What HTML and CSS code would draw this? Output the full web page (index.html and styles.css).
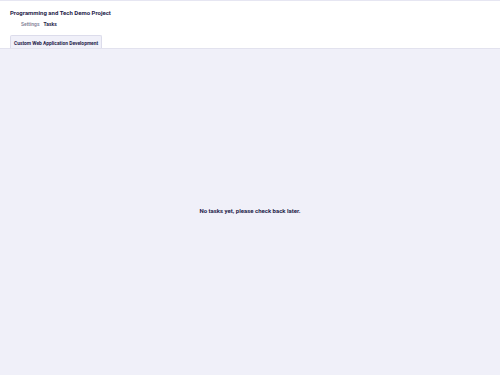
FILE: index.html
```html
<!DOCTYPE html>
<html>
<head>
<meta charset="utf-8">
<link rel="stylesheet" href="styles.css">
</head>
<body>
<div class="page">
  <header class="header">
    <h1 class="title">Programming and Tech Demo Project</h1>
    <nav class="nav">
      <a class="nav-link">Settings</a>
      <a class="nav-link active">Tasks</a>
    </nav>
    <div class="tabs">
      <div class="tab">Custom Web Application Development</div>
    </div>
  </header>
  <main class="main">
    <p class="empty">No tasks yet, please check back later.</p>
  </main>
</div>
</body>
</html>
```
FILE: styles.css
```css
html, body {
  margin: 0;
  padding: 0;
  height: 100%;
}
body {
  font-family: Roboto, "Noto Sans", sans-serif;
  background: #f0f0f9;
  color: #1f1d4a;
}
.page {
  display: flex;
  flex-direction: column;
  height: 100%;
}
.header {
  background: #ffffff;
  border-top: 1px solid #e6e6f2;
  border-bottom: 1px solid #e2e2ee;
  padding: 7px 10px 0 10px;
  display: flex;
  flex-direction: column;
}
.title {
  margin: 0;
  font-size: 6px;
  font-weight: 700;
  line-height: 9px;
  color: #1f1d4a;
}
.nav {
  display: flex;
  gap: 4px;
  padding-left: 11px;
  margin-top: 3px;
  font-size: 5px;
  line-height: 8px;
}
.nav-link {
  color: #7a7a90;
  font-weight: 500;
}
.nav-link.active {
  color: #1f1d4a;
  font-weight: 700;
}
.tabs {
  display: flex;
  margin-top: 7px;
}
.tab {
  background: #f0f0f9;
  border: 1px solid #dcdceb;
  border-bottom: none;
  border-radius: 2px 2px 0 0;
  padding: 3px 3px 0 3px;
  height: 9px;
  font-size: 4.9px;
  line-height: 8px;
  font-weight: 700;
  color: #1f1d4a;
}
.main {
  flex: 1;
  display: flex;
  align-items: center;
  justify-content: center;
}
.empty {
  margin: 0 0 4px 0;
  font-size: 6px;
  font-weight: 700;
  color: #1f1d4a;
}
```
